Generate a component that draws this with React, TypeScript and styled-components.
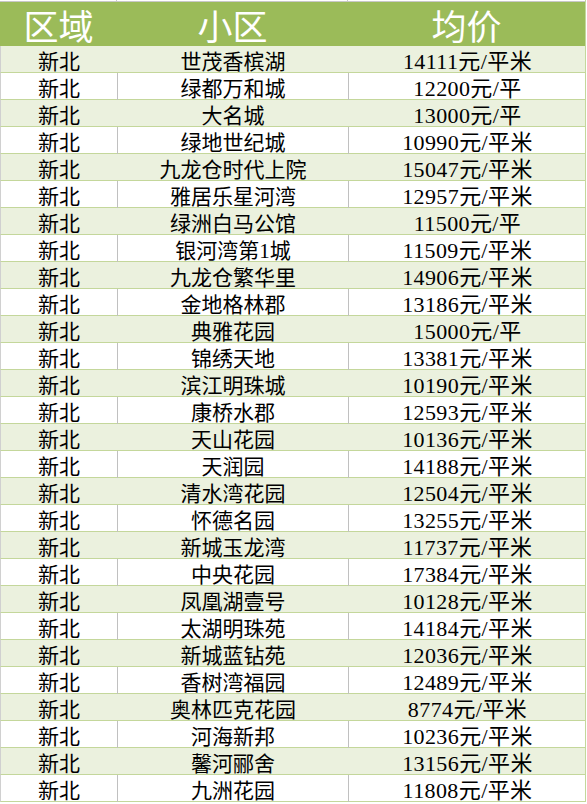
import React from 'react';
import styled, { createGlobalStyle } from 'styled-components';

const GlobalStyle = createGlobalStyle`
  html, body {
    margin: 0;
    padding: 0;
    background: #ffffff;
  }
  * {
    box-sizing: border-box;
  }
`;

const COLS = '117px 231px 237px';

const rows: [string, string, string][] = [
  ['新北', '世茂香槟湖', '14111元/平米'],
  ['新北', '绿都万和城', '12200元/平'],
  ['新北', '大名城', '13000元/平'],
  ['新北', '绿地世纪城', '10990元/平米'],
  ['新北', '九龙仓时代上院', '15047元/平米'],
  ['新北', '雅居乐星河湾', '12957元/平米'],
  ['新北', '绿洲白马公馆', '11500元/平'],
  ['新北', '银河湾第1城', '11509元/平米'],
  ['新北', '九龙仓繁华里', '14906元/平米'],
  ['新北', '金地格林郡', '13186元/平米'],
  ['新北', '典雅花园', '15000元/平'],
  ['新北', '锦绣天地', '13381元/平米'],
  ['新北', '滨江明珠城', '10190元/平米'],
  ['新北', '康桥水郡', '12593元/平米'],
  ['新北', '天山花园', '10136元/平米'],
  ['新北', '天润园', '14188元/平米'],
  ['新北', '清水湾花园', '12504元/平米'],
  ['新北', '怀德名园', '13255元/平米'],
  ['新北', '新城玉龙湾', '11737元/平米'],
  ['新北', '中央花园', '17384元/平米'],
  ['新北', '凤凰湖壹号', '10128元/平米'],
  ['新北', '太湖明珠苑', '14184元/平米'],
  ['新北', '新城蓝钻苑', '12036元/平米'],
  ['新北', '香树湾福园', '12489元/平米'],
  ['新北', '奥林匹克花园', '8774元/平米'],
  ['新北', '河海新邦', '10236元/平米'],
  ['新北', '馨河郦舍', '13156元/平米'],
  ['新北', '九洲花园', '11808元/平米'],
];

const Sheet = styled.div`
  width: 587px;
  height: 804px;
  overflow: hidden;
  background: #ffffff;
  font-family: "Liberation Serif", "Noto Sans CJK SC", serif;
`;

const Table = styled.div`
  width: 586px;
  border-right: 1px solid #c4d79b;
`;

const TopStrip = styled.div`
  display: grid;
  grid-template-columns: ${COLS};
  height: 1px;
`;

const TopTick = styled.div`
  border-right: 1px solid #c8c8c8;
`;

const HeaderRow = styled.div`
  display: grid;
  grid-template-columns: ${COLS};
  height: 45px;
  background: #9bbb59;
  border-top: 1px solid #c8c8c8;
`;

const HeaderCell = styled.div`
  display: flex;
  align-items: center;
  justify-content: center;
  padding-top: 9px;
  color: #ffffff;
  font-size: 35px;
  line-height: 1;
`;

const Row = styled.div<{ $shaded: boolean }>`
  display: grid;
  grid-template-columns: ${COLS};
  height: 27px;
  background: ${(p) => (p.$shaded ? '#ebf1de' : '#ffffff')};
  border-bottom: 1px solid #c4d79b;
  border-left: 1px solid #d0d0d0;
`;

const Cell = styled.div<{ $grid: boolean }>`
  display: flex;
  align-items: flex-end;
  justify-content: center;
  margin-bottom: -1px;
  color: #000000;
  font-size: 21px;
  line-height: 1;
  white-space: nowrap;
  border-right: 1px solid ${(p) => (p.$grid ? '#c0c0c0' : 'transparent')};
`;

const PriceCell = styled(Cell)`
  border-right: none;
  font-size: 22px;
  letter-spacing: 0.4px;
`;

export default function App() {
  return (
    <Sheet>
      <GlobalStyle />
      <Table>
        <TopStrip>
          <TopTick />
          <TopTick />
          <div />
        </TopStrip>
        <HeaderRow>
          <HeaderCell>区域</HeaderCell>
          <HeaderCell>小区</HeaderCell>
          <HeaderCell>均价</HeaderCell>
        </HeaderRow>
        {rows.map(([area, estate, price], i) => {
          const shaded = i % 2 === 0;
          return (
            <Row key={estate} $shaded={shaded}>
              <Cell $grid={!shaded}>{area}</Cell>
              <Cell $grid={!shaded}>{estate}</Cell>
              <PriceCell $grid={false}>{price}</PriceCell>
            </Row>
          );
        })}
      </Table>
    </Sheet>
  );
}
